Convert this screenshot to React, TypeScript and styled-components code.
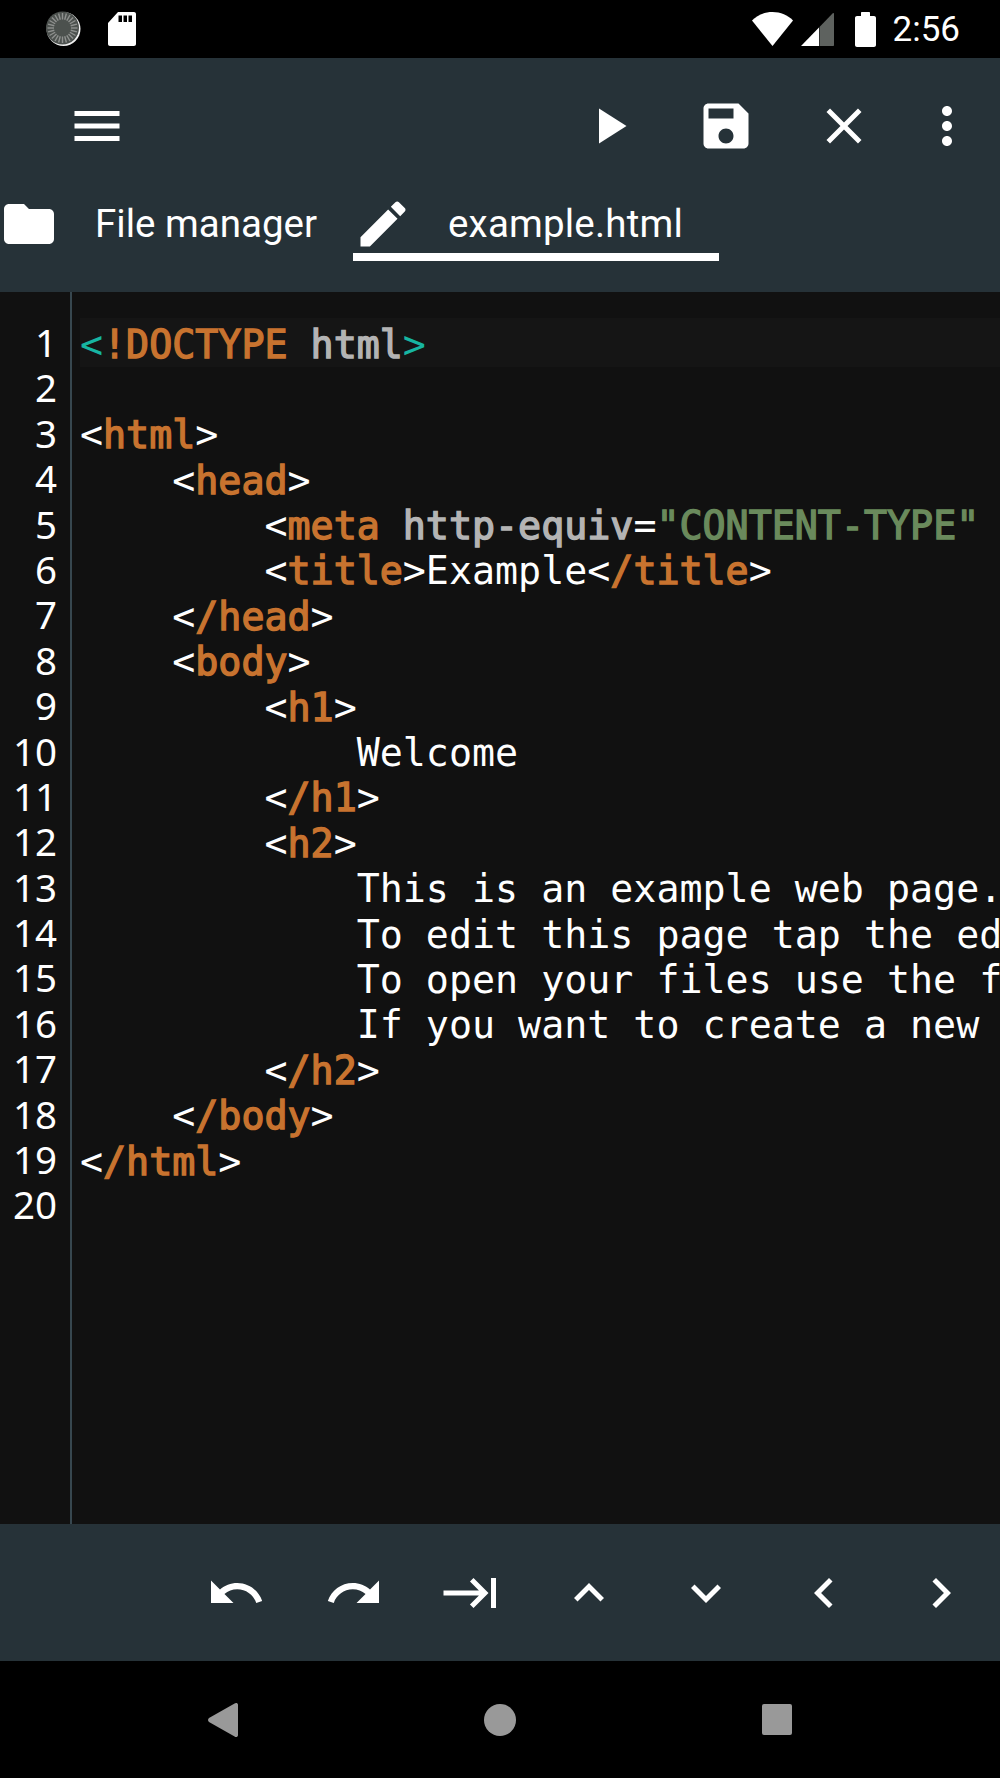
import styled, { createGlobalStyle } from "styled-components";

const GlobalStyle = createGlobalStyle`
    html, body {
        margin: 0;
        padding: 0;
        background: #000;
    }
`;

const Screen = styled.div`
    width: 1000px;
    height: 1778px;
    display: flex;
    flex-direction: column;
    overflow: hidden;
    background: #000;
`;

const StatusBar = styled.div`
    flex: 0 0 58px;
    display: flex;
    justify-content: space-between;
    align-items: center;
    padding: 0 40px 0 46px;
    background: #000;
`;

const StatusGroup = styled.div`
    display: flex;
    align-items: center;
`;

const Clock = styled.span`
    margin-left: 17px;
    color: #fff;
    font: 400 35px "Roboto", sans-serif;
`;

const Header = styled.div`
    flex: 0 0 234px;
    display: flex;
    flex-direction: column;
    background: #263238;
`;

const Toolbar = styled.div`
    flex: 0 0 136px;
    display: flex;
    align-items: center;
    padding-right: 9.5px;
`;

const Spacer = styled.div`
    flex: 1;
`;

const IconButton = styled.div<{ $width: number }>`
    flex: 0 0 ${(p) => p.$width}px;
    display: flex;
    justify-content: center;
    align-items: center;
`;

const Tabs = styled.div`
    display: flex;
    align-items: flex-start;
    gap: 36px;
    margin-left: -1px;
`;

const Tab = styled.div<{ $active?: boolean }>`
    display: flex;
    align-items: center;
    gap: ${(p) => (p.$active ? "35px" : "36px")};
    height: 59px;
    padding-right: ${(p) => (p.$active ? "36px" : "0")};
    border-bottom: 8px solid ${(p) => (p.$active ? "#fff" : "transparent")};
`;

const TabLabel = styled.span<{ $active?: boolean }>`
    color: #fff;
    font: 400 38.5px "Roboto", sans-serif;
    letter-spacing: ${(p) => (p.$active ? "0.2px" : "0")};
`;

const Editor = styled.div`
    flex: 1;
    display: flex;
    min-height: 0;
    background: #111;
`;

const Gutter = styled.div`
    flex: 0 0 72px;
    box-sizing: border-box;
    padding: 28px 13px 0 0;
    border-right: 2px solid #37474f;
`;

const LineNumber = styled.div`
    height: 45.4px;
    text-align: right;
    color: #fff;
    font: 400 38.5px/45.4px "Noto Sans", sans-serif;
`;

const Code = styled.div`
    flex: 1;
    min-width: 0;
    padding: 29.5px 0 0 8px;
    overflow: hidden;
`;

const CodeLine = styled.div<{ $current?: boolean }>`
    height: 45.4px;
    white-space: pre;
    color: #fff;
    font: 400 38.3px/45.4px "DejaVu Sans Mono", monospace;
    background: ${(p) => (p.$current ? "#151515" : "transparent")};
    box-shadow: ${(p) => (p.$current ? "0 -4px 0 #151515" : "none")};
`;

const Token = styled.span<{ $kind: "tag" | "bracket" | "attr" | "str" }>`
    -webkit-text-stroke: ${(p) => (p.$kind === "bracket" ? "0" : "1.4px")};
    color: ${(p) =>
        ({ tag: "#c8732f", bracket: "#17b5a2", attr: "#b4b4b4", str: "#6a8a5c" })[p.$kind]};
`;

const BottomBar = styled.div`
    flex: 0 0 137px;
    display: flex;
    justify-content: flex-end;
    align-items: center;
    background: #263238;
`;

const NavBar = styled.div`
    flex: 0 0 117px;
    display: grid;
    grid-template-columns: repeat(3, 277px);
    align-items: center;
    padding-left: 84px;
    background: #000;
`;

const NavCell = styled.div`
    display: flex;
    justify-content: center;
`;

const SpinnerSvg = styled.svg`
    margin-right: 27px;
`;

const SignalSvg = styled.svg`
    margin-left: 8px;
`;

const BatterySvg = styled.svg`
    margin-left: 21px;
`;

function Icon({ d, size = 60, fill = "#fff" }: { d: string; size?: number; fill?: string }) {
    return (
        <svg width={size} height={size} viewBox="0 0 24 24" fill={fill}>
            <path d={d} />
        </svg>
    );
}

const ICONS = {
    menu: "M3 18h18v-2H3v2zm0-5h18v-2H3v2zm0-7v2h18V6H3z",
    play: "M8 5v14l11-7z",
    save: "M17 3H5c-1.11 0-2 .9-2 2v14c0 1.1.89 2 2 2h14c1.1 0 2-.9 2-2V7l-4-4zm-5 16c-1.66 0-3-1.34-3-3s1.34-3 3-3 3 1.34 3 3-1.34 3-3 3zm3-10H5V5h10v4z",
    close: "M19 6.41L17.59 5 12 10.59 6.41 5 5 6.41 10.59 12 5 17.59 6.41 19 12 13.41 17.59 19 19 17.59 13.41 12z",
    more: "M12 8c1.1 0 2-.9 2-2s-.9-2-2-2-2 .9-2 2 .9 2 2 2zm0 2c-1.1 0-2 .9-2 2s.9 2 2 2 2-.9 2-2-.9-2-2-2zm0 6c-1.1 0-2 .9-2 2s.9 2 2 2 2-.9 2-2-.9-2-2-2z",
    folder: "M10 4H4c-1.1 0-1.99.9-1.99 2L2 18c0 1.1.9 2 2 2h16c1.1 0 2-.9 2-2V8c0-1.1-.9-2-2-2h-8l-2-2z",
    edit: "M3 17.25V21h3.75L17.81 9.94l-3.75-3.75L3 17.25zM20.71 7.04c.39-.39.39-1.02 0-1.41l-2.34-2.34c-.39-.39-1.02-.39-1.41 0l-1.83 1.83 3.75 3.75 1.83-1.83z",
    undo: "M12.5 8c-2.65 0-5.05.99-6.9 2.6L2 7v9h9l-3.62-3.62c1.39-1.16 3.16-1.88 5.12-1.88 3.54 0 6.55 2.31 7.6 5.5l2.37-.78C21.08 11.03 17.15 8 12.5 8z",
    redo: "M18.4 10.6C16.55 8.99 14.15 8 11.5 8c-4.65 0-8.58 3.03-9.96 7.22L3.9 16c1.05-3.19 4.05-5.5 7.6-5.5 1.95 0 3.73.72 5.12 1.88L13 16h9V7l-3.6 3.6z",
    tab: "M11.59 7.41L15.17 11H1v2h14.17l-3.59 3.59L13 18l6-6-6-6-1.41 1.41zM20 6v12h2V6h-2z",
    up: "M7.41 15.41L12 10.83l4.59 4.58L18 14l-6-6-6 6z",
    down: "M7.41 8.59L12 13.17l4.59-4.58L18 10l-6 6-6-6z",
    left: "M15.41 16.59L10.83 12l4.58-4.59L14 6l-6 6 6 6z",
    right: "M8.59 16.59L13.17 12 8.59 7.41 10 6l6 6-6 6z",
};

function SpinnerIcon() {
    const ticks = Array.from({ length: 24 }, (_, i) => i * 15);
    return (
        <SpinnerSvg width="35" height="36" viewBox="0 0 35 36">
            <circle cx="17.5" cy="18" r="17" fill="#f0f0f0" />
            <circle cx="16.5" cy="17" r="16.5" fill="#4c514e" />
            {ticks.map((angle) => (
                <rect
                    key={angle}
                    x="15.8"
                    y="2"
                    width="1.4"
                    height="6.5"
                    fill="#8f918f"
                    transform={`rotate(${angle} 16.5 17)`}
                />
            ))}
        </SpinnerSvg>
    );
}

function SdCardIcon() {
    return (
        <svg width="28" height="34" viewBox="0 0 28 34">
            <path
                fill="#fff"
                fillRule="evenodd"
                d="M10 0h16c1.100 0 2 .9 2 2v30c0 1.100-.9 2-2 2H2c-1.100 0-2-.9-2-2V11L10 0zM10.500 3.500v6.500h3.500V3.500zM15.500 3.500v6.500h3.500V3.500zM20.500 3.500v6.500h3.500V3.500z"
            />
        </svg>
    );
}

function WifiIcon() {
    return (
        <svg width="41" height="34" viewBox="0 0 41 34">
            <path fill="#fff" d="M0 8.500C5 3.200 12.500 0 20.500 0S36 3.200 41 8.500L20.500 34z" />
        </svg>
    );
}

function SignalIcon() {
    return (
        <SignalSvg width="33" height="33" viewBox="0 0 33 33">
            <path fill="#fff" d="M0 33L18 14.500V33z" />
            <path fill="#5e625f" d="M18.500 14L32 0c.6 0 1 .4 1 1v31c0 .6-.4 1-1 1H18.500z" />
        </SignalSvg>
    );
}

function BatteryIcon() {
    return (
        <BatterySvg width="21" height="35" viewBox="0 0 21 35">
            <path
                fill="#fff"
                d="M6 4V1c0-.6.4-1 1-1h7c.6 0 1 .4 1 1v3h4c1.100 0 2 .9 2 2v27c0 1.100-.9 2-2 2H2c-1.100 0-2-.9-2-2V6c0-1.100.9-2 2-2z"
            />
        </BatterySvg>
    );
}

const GUTTER_LINES = Array.from({ length: 20 }, (_, i) => i + 1);

const Tag = ({ children }: { children: string }) => <Token $kind="tag">{children}</Token>;

const CODE_LINES = [
    <>
        <Token $kind="bracket">&lt;</Token>
        <Tag>!DOCTYPE</Tag> <Token $kind="attr">html</Token>
        <Token $kind="bracket">&gt;</Token>
    </>,
    <></>,
    <>
        &lt;<Tag>html</Tag>&gt;
    </>,
    <>
        {"    <"}
        <Tag>head</Tag>&gt;
    </>,
    <>
        {"        <"}
        <Tag>meta</Tag> <Token $kind="attr">http-equiv</Token>=
        <Token $kind="str">"CONTENT-TYPE"</Token>
    </>,
    <>
        {"        <"}
        <Tag>title</Tag>&gt;Example&lt;<Tag>/title</Tag>&gt;
    </>,
    <>
        {"    <"}
        <Tag>/head</Tag>&gt;
    </>,
    <>
        {"    <"}
        <Tag>body</Tag>&gt;
    </>,
    <>
        {"        <"}
        <Tag>h1</Tag>&gt;
    </>,
    <>{"            Welcome"}</>,
    <>
        {"        <"}
        <Tag>/h1</Tag>&gt;
    </>,
    <>
        {"        <"}
        <Tag>h2</Tag>&gt;
    </>,
    <>{"            This is an example web page."}</>,
    <>{"            To edit this page tap the ed"}</>,
    <>{"            To open your files use the f"}</>,
    <>{"            If you want to create a new"}</>,
    <>
        {"        <"}
        <Tag>/h2</Tag>&gt;
    </>,
    <>
        {"    <"}
        <Tag>/body</Tag>&gt;
    </>,
    <>
        &lt;<Tag>/html</Tag>&gt;
    </>,
    <></>,
];

const BOTTOM_ACTIONS = [
    ICONS.undo,
    ICONS.redo,
    ICONS.tab,
    ICONS.up,
    ICONS.down,
    ICONS.left,
    ICONS.right,
];

export default function App() {
    return (
        <Screen>
            <GlobalStyle />
            <StatusBar>
                <StatusGroup>
                    <SpinnerIcon />
                    <SdCardIcon />
                </StatusGroup>
                <StatusGroup>
                    <WifiIcon />
                    <SignalIcon />
                    <BatteryIcon />
                    <Clock>2:56</Clock>
                </StatusGroup>
            </StatusBar>
            <Header>
                <Toolbar>
                    <IconButton $width={194}>
                        <Icon d={ICONS.menu} />
                    </IconButton>
                    <Spacer />
                    <IconButton $width={117.5}>
                        <Icon d={ICONS.play} />
                    </IconButton>
                    <IconButton $width={117.5}>
                        <Icon d={ICONS.save} />
                    </IconButton>
                    <IconButton $width={117.5}>
                        <Icon d={ICONS.close} />
                    </IconButton>
                    <IconButton $width={88}>
                        <Icon d={ICONS.more} />
                    </IconButton>
                </Toolbar>
                <Tabs>
                    <Tab>
                        <Icon d={ICONS.folder} />
                        <TabLabel>File manager</TabLabel>
                    </Tab>
                    <Tab $active>
                        <Icon d={ICONS.edit} />
                        <TabLabel $active>example.html</TabLabel>
                    </Tab>
                </Tabs>
            </Header>
            <Editor>
                <Gutter>
                    {GUTTER_LINES.map((line) => (
                        <LineNumber key={line}>{line}</LineNumber>
                    ))}
                </Gutter>
                <Code>
                    {CODE_LINES.map((line, index) => (
                        <CodeLine key={index} $current={index === 0}>
                            {line}
                        </CodeLine>
                    ))}
                </Code>
            </Editor>
            <BottomBar>
                {BOTTOM_ACTIONS.map((d) => (
                    <IconButton key={d} $width={117.5}>
                        <Icon d={d} />
                    </IconButton>
                ))}
            </BottomBar>
            <NavBar>
                <NavCell>
                    <svg width="30" height="34" viewBox="0 0 30 34">
                        <path fill="#999" d="M28 0c1 0 2 .6 2 2v30c0 1.400-1 2-2 2-.5 0-1-.2-1.400-.6L1 19c-1.300-1.200-1.300-2.800 0-4L26.600.6C27 .2 27.500 0 28 0z" />
                    </svg>
                </NavCell>
                <NavCell>
                    <svg width="32" height="32" viewBox="0 0 32 32">
                        <circle cx="16" cy="16" r="16" fill="#999" />
                    </svg>
                </NavCell>
                <NavCell>
                    <svg width="30" height="31" viewBox="0 0 30 31">
                        <rect width="30" height="31" rx="2" fill="#999" />
                    </svg>
                </NavCell>
            </NavBar>
        </Screen>
    );
}
